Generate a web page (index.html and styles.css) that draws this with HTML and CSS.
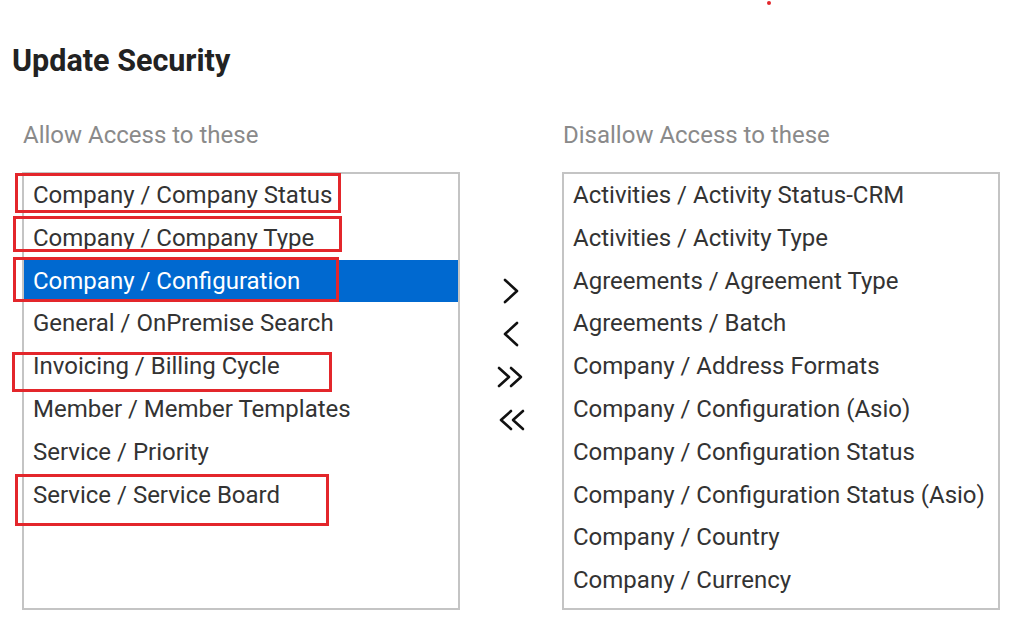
FILE: index.html
```html
<!DOCTYPE html>
<html lang="en">
<head>
	<meta charset="utf-8">
	<title>Update Security</title>
	<link rel="stylesheet" href="styles.css">
</head>
<body>

<span class="dot"></span>

<h1>Update Security</h1>

<section class="picker">
	<div class="column">
		<h2>Allow Access to these</h2>
		<ul class="list">
			<li>Company / Company Status</li>
			<li>Company / Company Type</li>
			<li class="selected">Company / Configuration</li>
			<li>General / OnPremise Search</li>
			<li>Invoicing / Billing Cycle</li>
			<li>Member / Member Templates</li>
			<li>Service / Priority</li>
			<li>Service / Service Board</li>
		</ul>
	</div>

	<div class="moves">
		<button type="button" title="Move right">
			<svg width="20" height="26" viewBox="0 0 20 26"><polyline points="4,2 16,13 4,24"/></svg>
		</button>
		<button type="button" title="Move left">
			<svg width="20" height="26" viewBox="0 0 20 26"><polyline points="16,2 4,13 16,24"/></svg>
		</button>
		<button type="button" title="Move all right">
			<svg width="30" height="26" viewBox="0 0 30 26"><polyline points="3,4 13,13 3,22"/><polyline points="15,4 25,13 15,22"/></svg>
		</button>
		<button type="button" title="Move all left">
			<svg width="30" height="26" viewBox="0 0 30 26"><polyline points="15,4 5,13 15,22"/><polyline points="27,4 17,13 27,22"/></svg>
		</button>
	</div>

	<div class="column">
		<h2>Disallow Access to these</h2>
		<ul class="list">
			<li>Activities / Activity Status-CRM</li>
			<li>Activities / Activity Type</li>
			<li>Agreements / Agreement Type</li>
			<li>Agreements / Batch</li>
			<li>Company / Address Formats</li>
			<li>Company / Configuration (Asio)</li>
			<li>Company / Configuration Status</li>
			<li>Company / Configuration Status (Asio)</li>
			<li>Company / Country</li>
			<li>Company / Currency</li>
		</ul>
	</div>
</section>

<!-- annotation boxes drawn over the screenshot -->
<div class="mark mark-1"></div>
<div class="mark mark-2"></div>
<div class="mark mark-3"></div>
<div class="mark mark-4"></div>
<div class="mark mark-5"></div>

</body>
</html>
```

FILE: styles.css
```css
body {
	margin: 0;
	position: relative;
	width: 1015px;
	height: 626px;
	overflow: hidden;
	background: #fff;

	font-family: Roboto, "Liberation Sans", Arial, sans-serif;
	color: #333;
}

h1 {
	margin: 0;
	padding: 43px 0 0 12px;
	font-size: 30.5px;
	line-height: 36px;
	font-weight: 700;
	color: #222;
}

.picker {
	display: flex;
	padding: 0 0 0 22px;
	margin-top: 41px;
}

.column {
	width: 438px;
}

.column h2 {
	margin: 0 0 22px 1px;
	font-size: 24px;
	line-height: 30px;
	font-weight: 400;
	color: #8a8a8a;
}

.list {
	list-style: none;
	margin: 0;
	padding: 0;
	width: 434px;
	height: 434px;
	border: 2px solid #c4c4c4;
}

.list li {
	height: 42.8px;
	line-height: 42.8px;
	padding-left: 9px;
	font-size: 24px;
	white-space: nowrap;
}

.list li.selected {
	background: #0069d0;
	color: #fff;
}

.moves {
	width: 102px;
	display: flex;
	flex-direction: column;
	align-items: center;
	padding-top: 149px;
}

.moves button {
	display: flex;
	align-items: center;
	justify-content: center;
	width: 40px;
	height: 43px;
	padding: 0;
	border: 0;
	background: none;
}

.moves polyline {
	fill: none;
	stroke: #111;
	stroke-width: 2.6;
	stroke-linecap: round;
	stroke-linejoin: round;
}

.dot {
	position: absolute;
	left: 767px;
	top: 1px;
	width: 4px;
	height: 4px;
	border-radius: 50%;
	background: #e3262b;
}

.mark {
	position: absolute;
	border: 3px solid #e3262b;
	box-sizing: border-box;
}

.mark-1 { left: 15px; top: 173px; width: 326px; height: 40px; }
.mark-2 { left: 13px; top: 216px; width: 329px; height: 36px; }
.mark-3 { left: 13px; top: 257px; width: 326px; height: 45px; }
.mark-4 { left: 12px; top: 352px; width: 320px; height: 40px; }
.mark-5 { left: 15px; top: 474px; width: 314px; height: 52px; }
```
